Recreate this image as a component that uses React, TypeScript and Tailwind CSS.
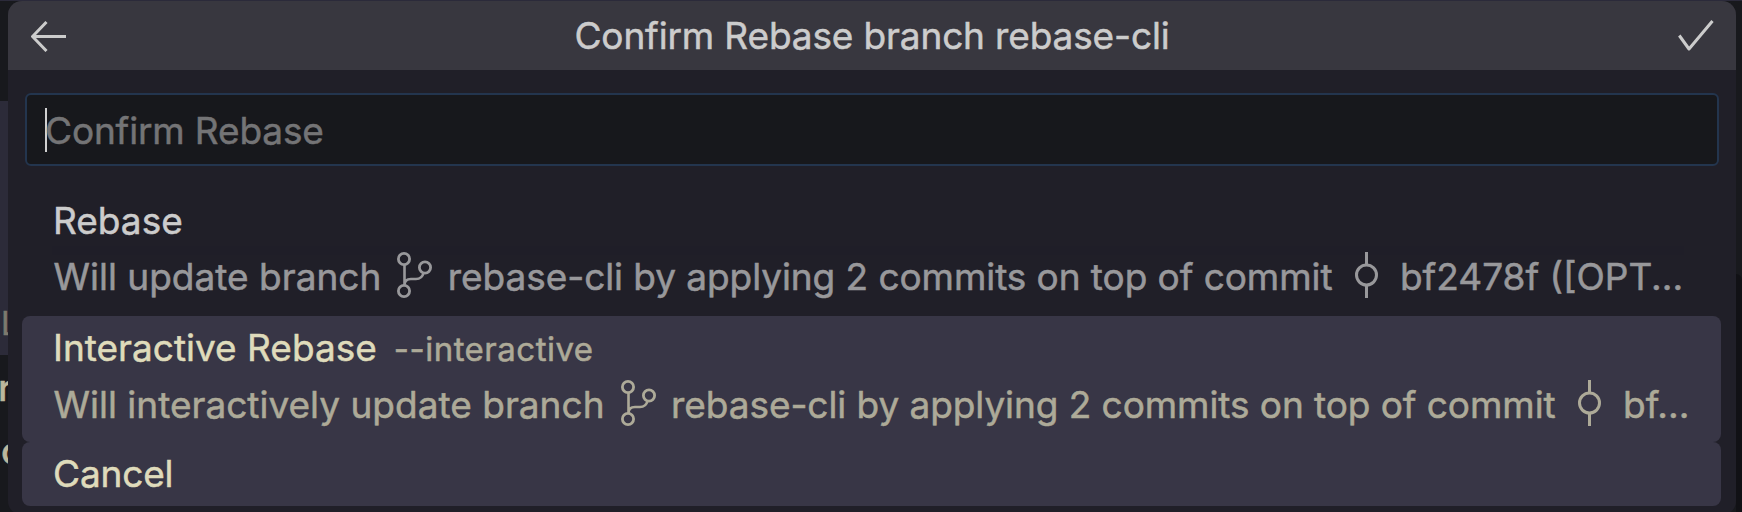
import React from 'react';

function BranchIcon() {
  return (
    <svg className="mr-[15.5px] mb-[4px] ml-[16px] h-[46px] w-[35px] shrink-0" viewBox="0 0 35 46" fill="none" stroke="currentColor" strokeWidth="2.8">
      <circle cx="7" cy="7" r="5.6" />
      <circle cx="28" cy="15.5" r="5.6" />
      <circle cx="7" cy="39" r="5.6" />
      <path d="M7.5 12.7V33.3M7.5 33c0-4 2.5-6 6.5-6h5c4.500 0 6.500-2 7.500-6" strokeWidth="2.6" />
    </svg>
  );
}

function CommitIcon() {
  return (
    <svg className="mr-[22px] mb-[4px] ml-[22.5px] h-[46px] w-[23px] shrink-0" viewBox="0 0 23 46" fill="none" stroke="currentColor" strokeWidth="3">
      <circle cx="11.5" cy="23" r="10" />
      <path d="M11.5 0V13M11.5 33V46" />
    </svg>
  );
}

function Detail({ lead, hash }: { lead: string; hash: string }) {
  return (
    <div className="ml-[0.5px] flex h-[56px] items-center whitespace-pre opacity-70">
      <span className="tracking-[0.01px]">{lead}</span>
      <BranchIcon />
      <span className="tracking-[-0.071px]">rebase-cli by applying 2 commits on top of commit</span>
      <CommitIcon />
      <span>{hash}</span>
    </div>
  );
}

export default function App() {
  return (
    <div className="flex h-[512px] w-[1742px] overflow-hidden bg-[#18191d] font-['Inter',sans-serif] text-[37px] leading-[56px] text-[#cccccc] [-webkit-text-stroke:0.5px_currentColor]">
      <div className="flex w-[8px] shrink-0 flex-col overflow-hidden border-t border-[#2b2a3a] text-[#bcb89d]">
        <div className="h-[100px] shrink-0" />
        <div className="flex h-[254px] shrink-0 items-end bg-[#2c2b39] text-[#7d7a6e]">
          <span className="ml-[1px] text-[32px] leading-[62px]">L</span>
        </div>
        <span className="-ml-[2px] h-[63px] shrink-0 font-medium leading-[65px]">r</span>
        <span className="ml-[1px] shrink-0 font-medium leading-[65px]">c</span>
      </div>
      <div className="min-w-0 flex-1 border-t border-[#2b2a3a]">
        <div className="h-[514px] overflow-hidden rounded-[14px] bg-[#201f28]">
          <div className="flex h-[69px] items-center justify-between bg-[#38373f]">
            <svg className="mt-[2px] ml-[23px] h-[31px] w-[35px]" viewBox="0 0 35 31" fill="none" stroke="currentColor" strokeWidth="3">
              <path d="M35 15.500H2M15.500 1L1.500 15.500L15.500 30" />
            </svg>
            <span className="tracking-[-0.146px]">Confirm Rebase branch rebase-cli</span>
            <svg className="mr-[22px] h-[31px] w-[36px]" viewBox="0 0 36 31" fill="none" stroke="currentColor" strokeWidth="3">
              <path d="M1.300 15.500L11 29L34.500 1" strokeLinejoin="round" />
            </svg>
          </div>
          <div className="mt-[23px] ml-[17px] flex h-[73px] w-[1694px] items-center rounded-[6px] border-2 border-[#23354e] bg-[#17181c] pl-[18px]">
            <div className="h-[44px] w-[2px] bg-[#d0d0d0]" />
            <span className="-ml-[2px] pt-[2px] tracking-[-0.15px] text-[#747476]">Confirm Rebase</span>
          </div>
          <div className="mt-[23px] ml-[14px] w-[1699px]">
            <div className="h-[127px] pt-[4px] pl-[31px]">
              <div className="h-[56px]">Rebase</div>
              <Detail lead="Will update branch" hash="bf2478f ([OPT..." />
            </div>
            <div className="h-[126px] rounded-[8px] bg-[#383646] pt-[4px] pl-[31px] text-[#dfdbbb]">
              <div className="flex h-[57px] items-baseline">
                <span>Interactive Rebase</span>
                <span className="ml-[17px] text-[33px] tracking-[0.495px] opacity-70">--interactive</span>
              </div>
              <Detail lead="Will interactively update branch" hash="bf..." />
            </div>
            <div className="h-[64px] rounded-[8px] bg-[#383646] pt-[4px] pl-[31px] tracking-[-0.15px] text-[#dfdbbb]">Cancel</div>
          </div>
        </div>
      </div>
      <div className="flex w-[6px] shrink-0 flex-col border-t border-[#2b2a3a]">
        <div className="h-[273px]" />
        <div className="flex-1 rounded-tr-[8px] bg-[#111115]" />
      </div>
    </div>
  );
}
